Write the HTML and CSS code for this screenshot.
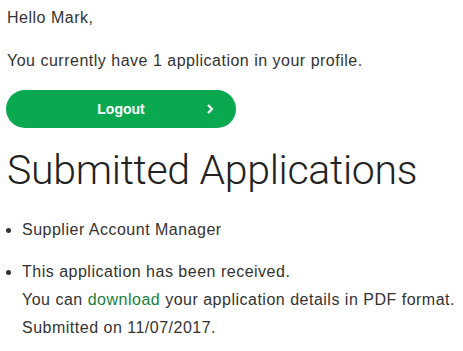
FILE: index.html
```html
<!DOCTYPE html>
<html lang="en">
<head>
  <meta charset="UTF-8">
  <title>Your Applications</title>
  <link rel="stylesheet" href="styles.css">
</head>
<body>
  <p class="greeting">Hello Mark,</p>
  <p class="summary">You currently have 1 application in your profile.</p>

  <a class="logout" href="#">
    <span class="logout-label">Logout</span>
    <svg class="logout-arrow" width="8" height="12" viewBox="0 0 8 12">
      <path d="M2 2 L6 6 L2 10" fill="none" stroke="#fff" stroke-width="2.2"/>
    </svg>
  </a>

  <h1 class="title">Submitted Applications</h1>

  <ul class="apps">
    <li>Supplier Account Manager</li>
    <li>
      This application has been received.<br>
      You can <a class="link" href="#">download</a> your application details in PDF format.<br>
      Submitted on 11/07/2017.
    </li>
  </ul>
</body>
</html>
```

FILE: styles.css
```css
body {
  margin: 0;
  padding: 0 7px;
  font-family: "Liberation Sans", Arial, sans-serif;
  font-size: 16px;
  letter-spacing: 0.5px;
  line-height: 28px;
  color: #333;
  background: #fff;
}
p {
  margin: 0;
}
.greeting {
  padding-top: 4px;
}
.summary {
  margin-top: 15px;
}
.logout {
  display: flex;
  align-items: center;
  justify-content: center;
  position: relative;
  width: 230px;
  height: 38px;
  margin: 15px 0 0 -1px;
  border-radius: 19px;
  background: #0aa84f;
  color: #fff;
  font-size: 14px;
  font-weight: bold;
  letter-spacing: 0;
  text-decoration: none;
}
.logout-arrow {
  position: absolute;
  right: 22px;
  top: 13px;
}
.title {
  margin: 14px 0 0;
  font-family: Roboto, "Liberation Sans", sans-serif;
  font-size: 41px;
  font-weight: 300;
  letter-spacing: -0.3px;
  line-height: 56px;
  color: #222;
}
.apps {
  margin: 18px 0 0;
  padding-left: 15px;
}
.apps li {
  margin-bottom: 14px;
}
.link {
  color: #1a7f3c;
  text-decoration: none;
}
```
